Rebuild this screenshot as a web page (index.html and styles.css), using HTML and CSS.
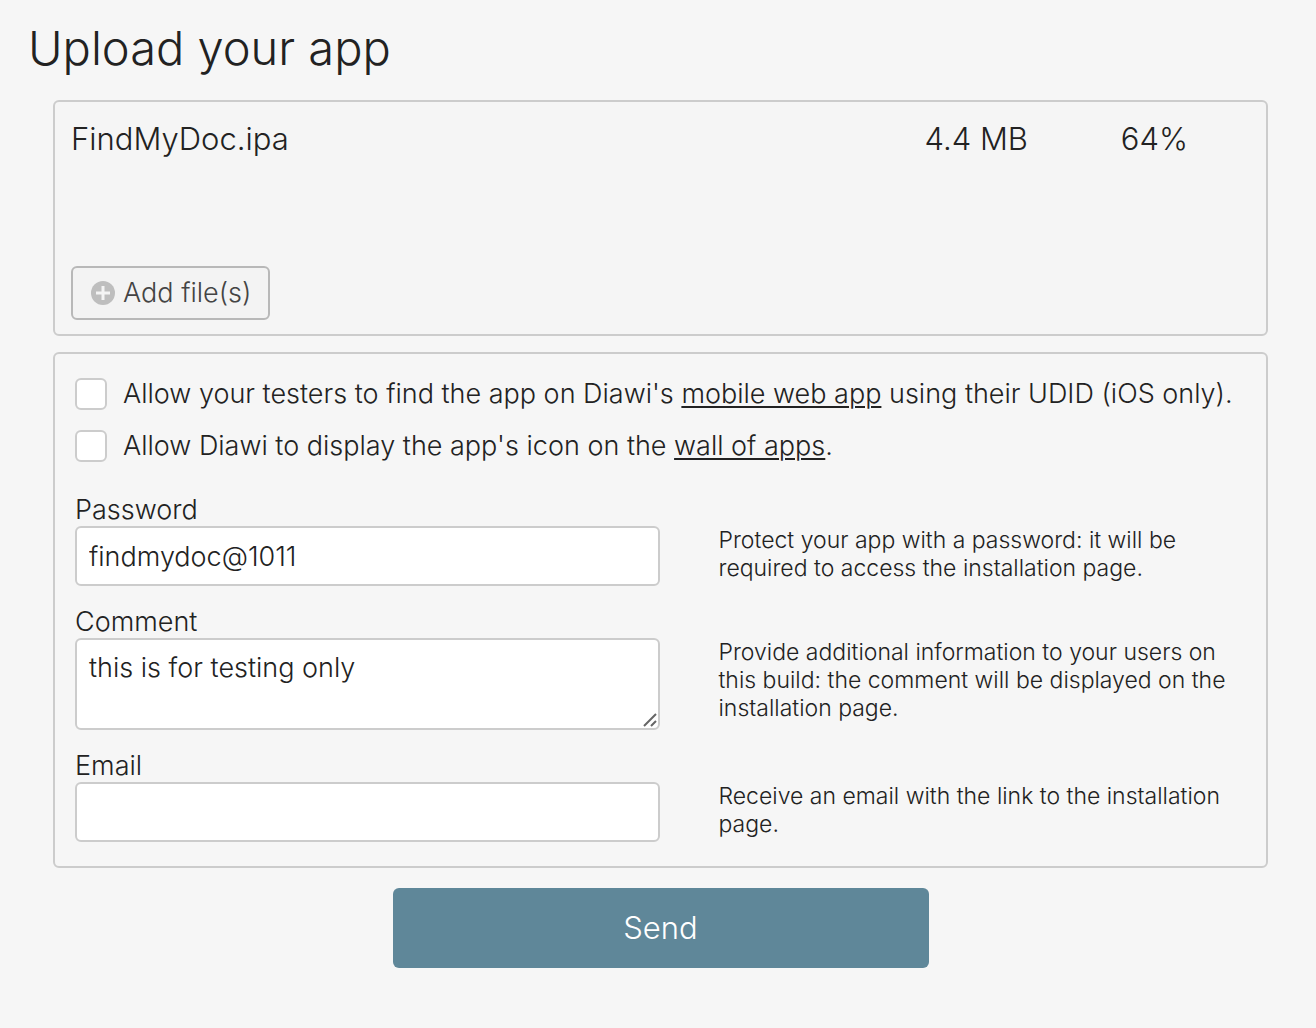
FILE: index.html
```html
<!DOCTYPE html>
<html lang="en">
<head>
<meta charset="utf-8">
<meta name="viewport" content="width=device-width, initial-scale=1">
<title>Upload your app</title>
<link rel="stylesheet" href="styles.css">
</head>
<body>
<main class="page">
  <h1 class="title">Upload your app</h1>
  <form class="form">
    <section class="panel uploads">
      <table class="files">
        <tbody>
          <tr>
            <td class="file-name">FindMyDoc.ipa</td>
            <td class="file-size">4.4 MB</td>
            <td class="file-progress">64%</td>
          </tr>
        </tbody>
      </table>
      <button class="add" type="button">
        <svg class="add-icon" viewBox="0 0 24 24" aria-hidden="true">
          <circle cx="12" cy="12" r="12" fill="#bebebe"/>
          <path d="M12 5v14M5 12h14" stroke="#f4f4f4" stroke-width="3"/>
        </svg>
        Add file(s)
      </button>
    </section>
    <section class="panel options">
      <div class="check-row">
        <input class="check" type="checkbox" id="find">
        <label for="find">Allow your testers to find the app on Diawi's <a class="link" href="#mobile">mobile web app</a> using their UDID (iOS only).</label>
      </div>
      <div class="check-row">
        <input class="check" type="checkbox" id="wall">
        <label for="wall">Allow Diawi to display the app's icon on the <a class="link" href="#wall-of-apps">wall of apps</a>.</label>
      </div>
      <div class="field">
        <label class="field-label" for="password">Password</label>
        <input class="control" type="text" id="password" value="findmydoc@1011" aria-describedby="password-help">
        <p class="help" id="password-help">Protect your app with a password: it will be required to access the installation page.</p>
      </div>
      <div class="field">
        <label class="field-label" for="comment">Comment</label>
        <div class="area-wrap">
          <textarea class="control area" id="comment" aria-describedby="comment-help">this is for testing only</textarea>
          <svg class="grip" viewBox="0 0 14 14" aria-hidden="true">
            <path d="M1 13L13 1M8 13L13 8" fill="none" stroke="#666" stroke-width="2"/>
          </svg>
        </div>
        <p class="help" id="comment-help">Provide additional information to your users on this build: the comment will be displayed on the installation page.</p>
      </div>
      <div class="field">
        <label class="field-label" for="email">Email</label>
        <input class="control" type="email" id="email" aria-describedby="email-help">
        <p class="help" id="email-help">Receive an email with the link to the installation page.</p>
      </div>
    </section>
    <button class="send" type="submit">Send</button>
  </form>
</main>
</body>
</html>
```
FILE: styles.css
```css
* {
  box-sizing: border-box;
}

body {
  margin: 0;
  background: #f6f6f6;
  color: #222;
  font: 300 27px/32px Inter, "Liberation Sans", sans-serif;
}

.page {
  padding: 16px 48px 60px 28px;
}

.title {
  margin: 0 0 20px;
  font-size: 47px;
  font-weight: 300;
  line-height: 64px;
}

.form {
  display: flex;
  flex-direction: column;
  align-items: center;
  padding-left: 25px;
}

.panel {
  width: 100%;
  border: 2px solid #ccc;
  border-radius: 6px;
}

.uploads {
  display: flex;
  flex-direction: column;
  justify-content: space-between;
  align-items: flex-start;
  min-height: 236px;
  margin-bottom: 16px;
  padding: 16px 16px 14px;
  background: #f5f5f5;
}

.files {
  width: 100%;
  border-collapse: collapse;
  font-size: 31px;
  line-height: 42px;
}

.files td {
  padding: 0;
}

.files .file-size {
  width: 160px;
  text-align: right;
}

.files .file-progress {
  width: 222px;
  padding-right: 62px;
  text-align: right;
}

.add {
  display: flex;
  align-items: center;
  gap: 8px;
  height: 54px;
  padding: 0 17px 0 18px;
  border: 2px solid #b8b8b8;
  border-radius: 6px;
  background: #f3f3f3;
  color: #444;
  font: inherit;
}

.add-icon {
  width: 24px;
  height: 24px;
}

.options {
  padding: 24px 20px;
}

.check-row {
  display: flex;
  gap: 16px;
  margin-bottom: 20px;
}

.check {
  flex: none;
  appearance: none;
  width: 32px;
  height: 32px;
  margin: 0;
  border: 2px solid #ccc;
  border-radius: 6px;
  background: #fff;
}

.link {
  color: inherit;
  text-decoration-thickness: 2px;
  text-underline-offset: 3px;
}

.field {
  display: grid;
  grid-template-columns: calc(50% - 1px) 1fr;
  column-gap: 59px;
  margin-top: 20px;
}

.check-row + .field {
  margin-top: 32px;
}

.field-label {
  grid-column: 1 / -1;
}

.control {
  display: block;
  width: 100%;
  height: 60px;
  margin: 0;
  padding: 12px;
  border: 2px solid #ccc;
  border-radius: 6px;
  background: #fff;
  color: inherit;
  font: inherit;
}

.area-wrap {
  position: relative;
}

.area {
  height: 92px;
  resize: none;
}

.grip {
  position: absolute;
  right: 3px;
  bottom: 3px;
  width: 14px;
  height: 14px;
}

.help {
  margin: 0;
  font-size: 23px;
  line-height: 28px;
}

.send {
  width: 536px;
  max-width: 100%;
  height: 80px;
  margin-top: 20px;
  border: 0;
  border-radius: 6px;
  background: #5f8799;
  color: #fff;
  font: inherit;
  font-size: 31px;
}
```
